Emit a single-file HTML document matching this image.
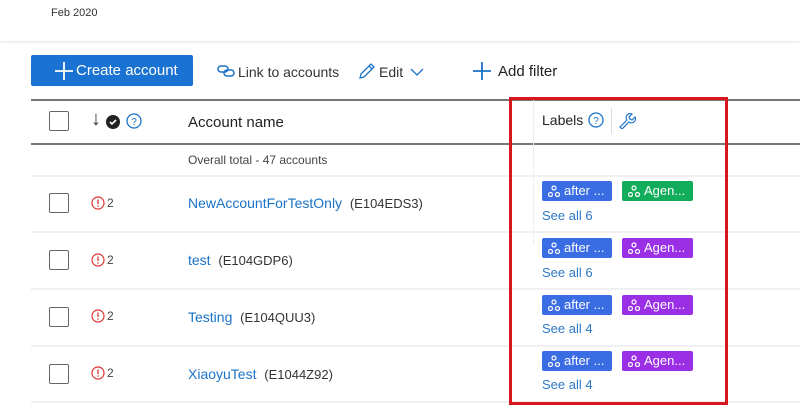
<!DOCTYPE html>
<html><head><style>
*{margin:0;padding:0;box-sizing:border-box}
body{width:800px;height:406px;background:#fff;font-family:"Liberation Sans",sans-serif;position:relative;overflow:hidden;color:#222}
.a{position:absolute}
.cb{position:absolute;width:20px;height:20px;border:1.5px solid #666;border-radius:2px;background:#fff}
.sep{position:absolute;left:31px;right:0;height:2px;background:#f0f0f0}
.link{color:#1a73c8}
.tag{position:absolute;height:20px;border-radius:2px;color:#fff;font-size:13px;line-height:20px;padding-left:22px}
.tag svg{position:absolute;left:6px;top:4px}
.see{position:absolute;color:#2b78c4;font-size:13px}
.warn{position:absolute;font-size:12px;color:#444}
</style></head><body>
<div class="a" style="left:0;top:0;width:800px;height:42px;border-bottom:1px solid #eee;box-shadow:0 1px 2px #f2f2f2"></div>
<div class="a" style="left:51px;top:7px;font-size:11px;color:#333">Feb 2020</div>

<div class="a" style="left:31px;top:55px;width:162px;height:31px;background:#1a73d2;border-radius:2px;color:#fff;font-size:15px;line-height:32px;padding-left:45px">Create account</div>
<svg class="a" style="left:54px;top:61px" width="20" height="20"><path d="M10 1v18M1 10h18" stroke="#fff" stroke-width="1.8"/></svg>

<svg class="a" style="left:217px;top:64px" width="18" height="14"><g fill="none" stroke="#1a73c8" stroke-width="1.5"><rect x="1" y="2" width="10" height="6" rx="3"/><rect x="7" y="6" width="10" height="6" rx="3"/></g></svg>
<div class="a" style="left:238px;top:64px;font-size:14px;color:#333">Link to accounts</div>
<svg class="a" style="left:358px;top:62px" width="18" height="18"><path d="M2 16l1-4L13 2l3 3L6 15z M11 4l3 3" fill="none" stroke="#1a73c8" stroke-width="1.3"/></svg>
<div class="a" style="left:379px;top:64px;font-size:14px;color:#333">Edit</div>
<svg class="a" style="left:410px;top:68px" width="14" height="9"><path d="M1 1l6 6 6-6" fill="none" stroke="#1a73c8" stroke-width="1.3"/></svg>
<svg class="a" style="left:472px;top:61px" width="20" height="20"><path d="M10 1v18M1 10h18" stroke="#1a73c8" stroke-width="1.8"/></svg>
<div class="a" style="left:498px;top:63px;font-size:15px;color:#222">Add filter</div>

<div class="a" style="left:31px;top:99px;width:769px;height:2px;background:#777"></div>
<div class="a" style="left:31px;top:143px;width:769px;height:2px;background:#777"></div>
<div class="cb" style="left:49px;top:111px"></div>
<div class="a" style="left:91px;top:108px;font-size:20px;color:#333">↓</div>
<svg class="a" style="left:106px;top:115px" width="14" height="14"><circle cx="7" cy="7" r="7" fill="#222"/><path d="M4 7l2 2 4-4" fill="none" stroke="#fff" stroke-width="1.6"/></svg>
<svg class="a" style="left:126px;top:113px" width="16" height="16"><circle cx="8" cy="8" r="7" fill="none" stroke="#1a73c8" stroke-width="1.3"/><text x="8" y="12" font-size="10" fill="#1a73c8" text-anchor="middle" font-family="Liberation Sans">?</text></svg>
<div class="a" style="left:188px;top:114px;font-size:15px;color:#222">Account name</div>
<div class="a" style="left:533px;top:100px;width:1px;height:145px;background:#eee"></div>
<div class="a" style="left:542px;top:112px;font-size:14px;color:#222">Labels</div>
<svg class="a" style="left:588px;top:112px" width="16" height="16"><circle cx="8" cy="8" r="7" fill="none" stroke="#1a73c8" stroke-width="1.3"/><text x="8" y="12" font-size="10" fill="#1a73c8" text-anchor="middle" font-family="Liberation Sans">?</text></svg>
<div class="a" style="left:611px;top:108px;width:1px;height:26px;background:#ddd"></div>
<svg class="a" style="left:618px;top:111px" width="18" height="18"><path d="M2 16l7-7a4 4 0 0 1 5-6l-3 3 1 2 2 1 3-3a4 4 0 0 1-6 5l-7 7z" fill="none" stroke="#1a73c8" stroke-width="1.2"/></svg>

<div class="a" style="left:188px;top:153px;font-size:12px;color:#444">Overall total - 47 accounts</div>

<div class="sep" style="top:175px"></div>
<div class="sep" style="top:231px"></div>
<div class="sep" style="top:288px"></div>
<div class="sep" style="top:345px"></div>
<div class="sep" style="top:401px"></div>

<div class="cb" style="left:49px;top:193px"></div>
<div class="cb" style="left:49px;top:250px"></div>
<div class="cb" style="left:49px;top:307px"></div>
<div class="cb" style="left:49px;top:364px"></div>

<svg class="a" style="left:91px;top:196px" width="14" height="14"><circle cx="7" cy="7" r="6" fill="none" stroke="#d33" stroke-width="1.2"/><path d="M7 3.5v4.5" stroke="#d33" stroke-width="1.3"/><circle cx="7" cy="10" r=".8" fill="#d33"/></svg><div class="warn" style="left:107px;top:196px">2</div>
<svg class="a" style="left:91px;top:253px" width="14" height="14"><circle cx="7" cy="7" r="6" fill="none" stroke="#d33" stroke-width="1.2"/><path d="M7 3.5v4.5" stroke="#d33" stroke-width="1.3"/><circle cx="7" cy="10" r=".8" fill="#d33"/></svg><div class="warn" style="left:107px;top:253px">2</div>
<svg class="a" style="left:91px;top:309px" width="14" height="14"><circle cx="7" cy="7" r="6" fill="none" stroke="#d33" stroke-width="1.2"/><path d="M7 3.5v4.5" stroke="#d33" stroke-width="1.3"/><circle cx="7" cy="10" r=".8" fill="#d33"/></svg><div class="warn" style="left:107px;top:309px">2</div>
<svg class="a" style="left:91px;top:366px" width="14" height="14"><circle cx="7" cy="7" r="6" fill="none" stroke="#d33" stroke-width="1.2"/><path d="M7 3.5v4.5" stroke="#d33" stroke-width="1.3"/><circle cx="7" cy="10" r=".8" fill="#d33"/></svg><div class="warn" style="left:107px;top:366px">2</div>

<div class="a" style="left:188px;top:195px;font-size:14px"><span class="link">NewAccountForTestOnly</span>&nbsp; <span style="color:#333;font-size:13px">(E104EDS3)</span></div>
<div class="a" style="left:188px;top:252px;font-size:14px"><span class="link">test</span>&nbsp; <span style="color:#333;font-size:13px">(E104GDP6)</span></div>
<div class="a" style="left:188px;top:309px;font-size:14px"><span class="link">Testing</span>&nbsp; <span style="color:#333;font-size:13px">(E104QUU3)</span></div>
<div class="a" style="left:188px;top:366px;font-size:14px"><span class="link">XiaoyuTest</span>&nbsp; <span style="color:#333;font-size:13px">(E1044Z92)</span></div>

<div class="tag" style="left:542px;top:181px;width:70px;background:#3a6de3"><svg width="12" height="12"><g fill="none" stroke="#fff" stroke-width="1.2"><circle cx="6" cy="3" r="2"/><circle cx="2.5" cy="9.5" r="2"/><circle cx="9.5" cy="9.5" r="2"/></g></svg>after ...</div>
<div class="tag" style="left:622px;top:181px;width:71px;background:#12ad5a"><svg width="12" height="12"><g fill="none" stroke="#fff" stroke-width="1.2"><circle cx="6" cy="3" r="2"/><circle cx="2.5" cy="9.5" r="2"/><circle cx="9.5" cy="9.5" r="2"/></g></svg>Agen...</div>
<div class="see" style="left:542px;top:208px">See all 6</div>

<div class="tag" style="left:542px;top:238px;width:70px;background:#3a6de3"><svg width="12" height="12"><g fill="none" stroke="#fff" stroke-width="1.2"><circle cx="6" cy="3" r="2"/><circle cx="2.5" cy="9.5" r="2"/><circle cx="9.5" cy="9.5" r="2"/></g></svg>after ...</div>
<div class="tag" style="left:622px;top:238px;width:71px;background:#9b2fe6"><svg width="12" height="12"><g fill="none" stroke="#fff" stroke-width="1.2"><circle cx="6" cy="3" r="2"/><circle cx="2.5" cy="9.5" r="2"/><circle cx="9.5" cy="9.5" r="2"/></g></svg>Agen...</div>
<div class="see" style="left:542px;top:265px">See all 6</div>

<div class="tag" style="left:542px;top:295px;width:70px;background:#3a6de3"><svg width="12" height="12"><g fill="none" stroke="#fff" stroke-width="1.2"><circle cx="6" cy="3" r="2"/><circle cx="2.5" cy="9.5" r="2"/><circle cx="9.5" cy="9.5" r="2"/></g></svg>after ...</div>
<div class="tag" style="left:622px;top:295px;width:71px;background:#9b2fe6"><svg width="12" height="12"><g fill="none" stroke="#fff" stroke-width="1.2"><circle cx="6" cy="3" r="2"/><circle cx="2.5" cy="9.5" r="2"/><circle cx="9.5" cy="9.5" r="2"/></g></svg>Agen...</div>
<div class="see" style="left:542px;top:321px">See all 4</div>

<div class="tag" style="left:542px;top:351px;width:70px;background:#3a6de3"><svg width="12" height="12"><g fill="none" stroke="#fff" stroke-width="1.2"><circle cx="6" cy="3" r="2"/><circle cx="2.5" cy="9.5" r="2"/><circle cx="9.5" cy="9.5" r="2"/></g></svg>after ...</div>
<div class="tag" style="left:622px;top:351px;width:71px;background:#9b2fe6"><svg width="12" height="12"><g fill="none" stroke="#fff" stroke-width="1.2"><circle cx="6" cy="3" r="2"/><circle cx="2.5" cy="9.5" r="2"/><circle cx="9.5" cy="9.5" r="2"/></g></svg>Agen...</div>
<div class="see" style="left:542px;top:377px">See all 4</div>

<div class="a" style="left:509px;top:97px;width:219px;height:308px;border:3px solid #d9161d"></div>
</body></html>
